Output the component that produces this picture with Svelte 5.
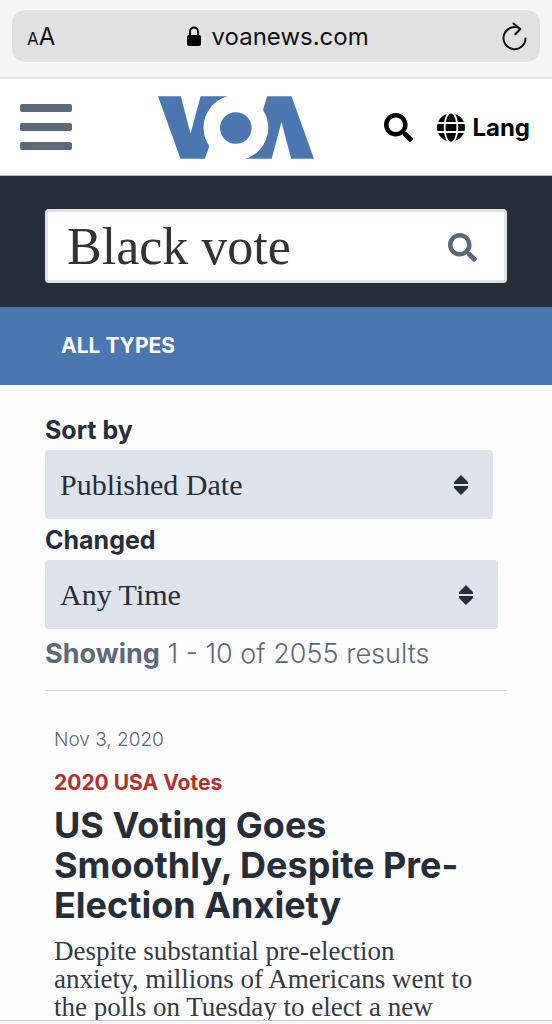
<!--
  Mobile search results page, framed by the browser's address bar
  on top and the edge of its toolbar at the bottom.
-->
<script lang="ts">
  interface Filter {
    id: string;
    label: string;
    options: string[];
  }

  interface Result {
    date: string;
    category: string;
    title: string;
    body: string;
  }

  let query = $state('Black vote');

  const filters: Filter[] = [
    { id: 'sort', label: 'Sort by', options: ['Published Date'] },
    { id: 'changed', label: 'Changed', options: ['Any Time'] },
  ];

  const results: Result[] = [
    {
      date: 'Nov 3, 2020',
      category: '2020 USA Votes',
      title: 'US Voting Goes Smoothly, Despite Pre-Election Anxiety',
      body: 'Despite substantial pre-election anxiety, millions of Americans went to the polls on Tuesday to elect a new',
    },
  ];
</script>

{#snippet magnifier()}
  <svg class="magnifier" viewBox="0 0 512 512" aria-hidden="true">
    <path
      d="M505 442.7L405.3 343c-4.5-4.5-10.6-7-17-7H372c27.6-35.3 44-79.7 44-128C416 93.1 322.9 0 208 0S0 93.1 0 208s93.1 208 208 208c48.3 0 92.7-16.4 128-44v16.3c0 6.4 2.5 12.5 7 17l99.7 99.7c9.4 9.4 24.6 9.4 33.9 0l28.3-28.3c9.4-9.4 9.4-24.6.1-34zM208 336c-70.7 0-128-57.2-128-128 0-70.7 57.2-128 128-128 70.7 0 128 57.2 128 128 0 70.7-57.2 128-128 128z"
    />
  </svg>
{/snippet}

<div class="screen">
  <div class="browser">
    <div class="address">
      <button class="text-size" aria-label="Text size"><small>A</small>A</button>
      <span class="host">
        <svg width="14" height="20" viewBox="0 0 14 20" aria-hidden="true">
          <rect y="9" width="14" height="11" rx="2" />
          <path d="M3 10V5.5a4 4 0 0 1 8 0V10" fill="none" stroke="#000" stroke-width="2" />
        </svg>
        voanews.com
      </span>
      <button class="reload" aria-label="Reload">
        <svg width="28" height="32" viewBox="0 0 28 32" aria-hidden="true">
          <path d="M20 8.6A11 11 0 1 0 25.5 18.5M13.5 3.5l6.8 5.5-5 5.2" />
        </svg>
      </button>
    </div>
  </div>

  <header>
    <button class="menu" aria-label="Menu"><i></i><i></i><i></i></button>
    <a class="logo" href="/" aria-label="VOA">
      <svg width="156" height="63" viewBox="27 31 465 187" aria-hidden="true">
        <path d="M27 31H95L124 143L154 31H235A97 97 0 0 0 180 180L167 218H94Z" />
        <circle cx="259" cy="126" r="47" />
        <path d="M352 31H425L492 218H424L395 108L366 218H286A97 97 0 0 0 340 72Z" />
      </svg>
    </a>
    <div class="tools">
      <button aria-label="Search">{@render magnifier()}</button>
      <a class="lang" href="/languages">
        <svg width="28" height="29" viewBox="0 0 496 512" aria-hidden="true">
          <path
            d="M336.5 160C322 70.7 287.8 8 248 8s-74 62.7-88.5 152h177zM152 256c0 22.2 1.2 43.5 3.3 64h185.3c2.1-20.5 3.3-41.8 3.3-64s-1.2-43.5-3.3-64H155.3c-2.1 20.5-3.3 41.8-3.3 64zm324.7-96c-28.6-67.9-86.5-120.4-158-141.6 24.4 33.8 41.2 84.7 50 141.6h108zM177.2 18.4C105.8 39.6 47.8 92.1 19.3 160h108c8.7-56.9 25.5-107.8 49.9-141.6zM487.4 192H372.7c2.1 21 3.3 42.5 3.3 64s-1.2 43-3.3 64h114.6c5.5-20.5 8.6-41.8 8.6-64s-3.1-43.5-8.5-64zM120 256c0-21.5 1.2-43 3.3-64H8.6C3.2 212.5 0 233.8 0 256s3.2 43.5 8.6 64h114.6c-2-21-3.2-42.5-3.2-64zm39.5 96c14.5 89.3 48.7 152 88.5 152s74-62.7 88.5-152h-177zm159.3 141.6c71.4-21.2 129.4-73.7 158-141.6h-108c-8.8 56.9-25.6 107.8-50 141.6zM19.3 352c28.6 67.9 86.5 120.4 158 141.6-24.4-33.8-41.2-84.7-50-141.6h-108z"
          />
        </svg>
        Lang
      </a>
    </div>
  </header>

  <main>
    <form class="search" onsubmit={(e) => e.preventDefault()}>
      <div class="field">
        <input type="text" aria-label="Search" bind:value={query} />
        <button aria-label="Submit search">{@render magnifier()}</button>
      </div>
    </form>

    <nav><a href="/search">ALL TYPES</a></nav>

    <section class="content">
      {#each filters as filter}
        <label for={filter.id}>{filter.label}</label>
        <div class="select {filter.id}">
          <select id={filter.id}>
            {#each filter.options as option}
              <option>{option}</option>
            {/each}
          </select>
          <svg width="14" height="20" viewBox="0 0 14 20" aria-hidden="true">
            <path d="M7 0l7 7v2H0V7zM7 20l7-7v-2H0v2z" />
          </svg>
        </div>
      {/each}

      <p class="count"><strong>Showing</strong> 1 - 10 of 2055 results</p>

      {#each results as result}
        <article>
          <p class="date">{result.date}</p>
          <a class="category" href="/usa-votes">{result.category}</a>
          <h2>{result.title}</h2>
          <p class="body">{result.body}</p>
        </article>
      {/each}
    </section>
  </main>

  <div class="toolbar"></div>
</div>

<style>
  :global(body) {
    margin: 0;
  }

  .screen {
    --navy: #252e39;
    --blue: #4a77b2;
    --slate: #5b697b;
    --sans: Inter, 'Liberation Sans', sans-serif;
    --serif: 'Liberation Serif', serif;

    display: flex;
    flex-direction: column;
    height: 100vh;
    overflow: hidden;
    background: #fdfdfd;
    color: var(--navy);
    font-family: var(--sans);
  }
  svg {
    display: block;
    flex: none;
  }
  button {
    display: block;
    padding: 0;
    border: 0;
    background: none;
    color: inherit;
    font: inherit;
  }
  a {
    color: inherit;
    text-decoration: none;
  }
  p,
  h2 {
    margin: 0;
  }
  .magnifier {
    width: 29px;
    height: 29px;
    fill: currentColor;
  }

  .browser {
    flex: none;
    padding: 10px 12px 15px;
    border-bottom: 2px solid #e2e2e2;
    background: #f5f5f5;
  }
  .address {
    display: flex;
    align-items: center;
    justify-content: space-between;
    height: 52px;
    padding: 0 12px 0 15px;
    border-radius: 14px;
    background: #e1e1e1;
    color: #111;
    font-size: 24px;
  }
  .address small {
    font-size: 17px;
  }
  .host {
    display: flex;
    align-items: center;
    gap: 11px;
  }
  .reload path {
    fill: none;
    stroke: #111;
    stroke-width: 2;
    stroke-linecap: round;
    stroke-linejoin: round;
  }

  header {
    display: flex;
    flex: none;
    align-items: center;
    justify-content: space-between;
    height: 96px;
    padding: 0 22px 0 20px;
    border-bottom: 1px solid #b5babd;
    background: #fff;
    color: #000;
  }
  .menu {
    display: grid;
    gap: 11px;
  }
  .menu i {
    width: 52px;
    height: 8px;
    border-radius: 2px;
    background: var(--slate);
  }
  .logo {
    margin-left: 16px;
    fill: var(--blue);
  }
  .tools {
    display: flex;
    align-items: center;
    gap: 24px;
  }
  .lang {
    display: flex;
    align-items: center;
    gap: 7px;
    font-size: 24px;
    font-weight: 700;
  }

  main {
    flex: 1;
    min-height: 0;
    overflow: hidden;
  }
  .search {
    padding: 33px 45px 24px;
    background: var(--navy);
  }
  .field {
    display: flex;
    align-items: center;
    box-sizing: border-box;
    height: 74px;
    padding: 2px 27px 0 19px;
    border: 3px solid #dfe2e8;
    border-radius: 4px;
    background: #fff;
    color: var(--slate);
  }
  .field input {
    flex: 1;
    min-width: 0;
    padding: 0;
    border: 0;
    outline: 0;
    background: none;
    color: #333;
    font: 52px/60px var(--serif);
  }
  nav {
    padding: 0 61px;
    background: var(--blue);
    color: #fff;
    font-size: 21px;
    font-weight: 700;
    line-height: 78px;
  }

  .content {
    padding: 26px 45px 0;
  }
  label {
    display: block;
    font-size: 25px;
    font-weight: 700;
    line-height: 39px;
  }
  .select {
    position: relative;
    width: 98%;
    margin-bottom: 2px;
  }
  .select.sort {
    width: 97%;
  }
  select {
    width: 100%;
    height: 69px;
    padding: 0 15px;
    border: 0;
    border-radius: 4px;
    appearance: none;
    background: #dee2ea;
    color: var(--navy);
    font: 30px var(--serif);
  }
  .select svg {
    position: absolute;
    top: 25px;
    right: 25px;
    fill: var(--navy);
    pointer-events: none;
  }
  .count {
    padding-bottom: 13px;
    border-bottom: 1px solid #dcdfe3;
    color: var(--slate);
    font-size: 27px;
    font-weight: 300;
    line-height: 46px;
  }
  .count strong {
    font-weight: 700;
  }

  article {
    padding: 28px 9px 0;
  }
  .date {
    color: var(--slate);
    font-size: 19px;
    font-weight: 300;
    line-height: 42px;
  }
  .category {
    display: block;
    color: #b0302f;
    font-size: 21px;
    font-weight: 700;
    line-height: 44px;
  }
  h2 {
    font-size: 36px;
    font-weight: 700;
    line-height: 40px;
  }
  .body {
    margin-top: 12px;
    padding-right: 16px;
    color: #333b45;
    font-family: var(--serif);
    font-size: 27px;
    line-height: 28px;
  }

  .toolbar {
    flex: none;
    height: 3px;
    border-top: 1px solid #c9c9c9;
    background: #f5f5f5;
  }
</style>
